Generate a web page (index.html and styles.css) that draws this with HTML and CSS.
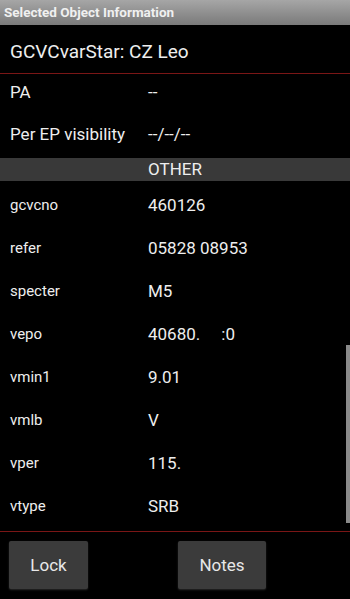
FILE: index.html
```html
<!DOCTYPE html>
<html>
<head>
<meta charset="utf-8">
<link rel="stylesheet" href="styles.css">
</head>
<body>
<div class="app">
  <div class="titlebar">Selected Object Information</div>
  <div class="header">GCVCvarStar: CZ Leo</div>
  <div class="divider"></div>
  <div class="content">
    <div class="section top">
      <div class="row big"><span class="label">PA</span><span class="value">--</span></div>
      <div class="row big"><span class="label">Per EP visibility</span><span class="value">--/--/--</span></div>
    </div>
    <div class="band">OTHER</div>
    <div class="section other">
      <div class="row"><span class="label">gcvcno</span><span class="value">460126</span></div>
      <div class="row"><span class="label">refer</span><span class="value">05828 08953</span></div>
      <div class="row"><span class="label">specter</span><span class="value">M5</span></div>
      <div class="row"><span class="label">vepo</span><span class="value">40680.&nbsp;&nbsp;&nbsp;&nbsp;&nbsp;:0</span></div>
      <div class="row"><span class="label">vmin1</span><span class="value">9.01</span></div>
      <div class="row"><span class="label">vmlb</span><span class="value">V</span></div>
      <div class="row"><span class="label">vper</span><span class="value">115.</span></div>
      <div class="row"><span class="label">vtype</span><span class="value">SRB</span></div>
    </div>
    <div class="scrollthumb"></div>
  </div>
  <div class="divider"></div>
  <div class="buttons">
    <button class="btn lock">Lock</button>
    <button class="btn notes">Notes</button>
  </div>
</div>
</body>
</html>
```
FILE: styles.css
```css
html, body {
  margin: 0;
  padding: 0;
  background: #000;
}
.app {
  width: 350px;
  height: 599px;
  background: #000;
  color: #eeeeee;
  font-family: Roboto, "Noto Sans", sans-serif;
  display: flex;
  flex-direction: column;
  overflow: hidden;
}
.titlebar {
  height: 25px;
  box-sizing: border-box;
  padding-left: 4px;
  background: linear-gradient(#a6a6a6, #7a7a7a);
  color: #f0f0f0;
  font-weight: bold;
  font-size: 13.5px;
  line-height: 25px;
}
.header {
  height: 48px;
  box-sizing: border-box;
  padding-left: 10px;
  padding-top: 16px;
  font-size: 19px;
  line-height: 22px;
}
.divider {
  height: 1px;
  background: #7a1616;
}
.content {
  position: relative;
  height: 457px;
}
.row {
  height: 43px;
  display: flex;
  align-items: center;
  padding-left: 10px;
}
.row.big {
  height: 42px;
  align-items: flex-start;
  padding-top: 8px;
  box-sizing: border-box;
}
.label {
  width: 138px;
  font-size: 15px;
  line-height: 20px;
}
.row.big .label {
  font-size: 17px;
}
.value {
  font-size: 17px;
  line-height: 20px;
}
.band {
  height: 23px;
  background: #393939;
  text-align: center;
  font-size: 17px;
  line-height: 23px;
}
.section.other {
  padding-top: 2px;
}
.scrollthumb {
  position: absolute;
  right: 0;
  top: 271px;
  width: 4px;
  height: 178px;
  background: #8a8a8a;
}
.buttons {
  display: flex;
  padding-top: 9px;
  padding-left: 9px;
}
.btn {
  height: 48px;
  border: none;
  border-radius: 2px;
  background: #3b3b3b;
  color: #e8e8e8;
  font-family: Roboto, "Noto Sans", sans-serif;
  font-size: 17px;
  box-shadow: 0 1px 2px rgba(80, 80, 80, 0.5);
  padding: 0;
}
.lock {
  width: 79px;
}
.notes {
  width: 88px;
  margin-left: 90px;
}
```
